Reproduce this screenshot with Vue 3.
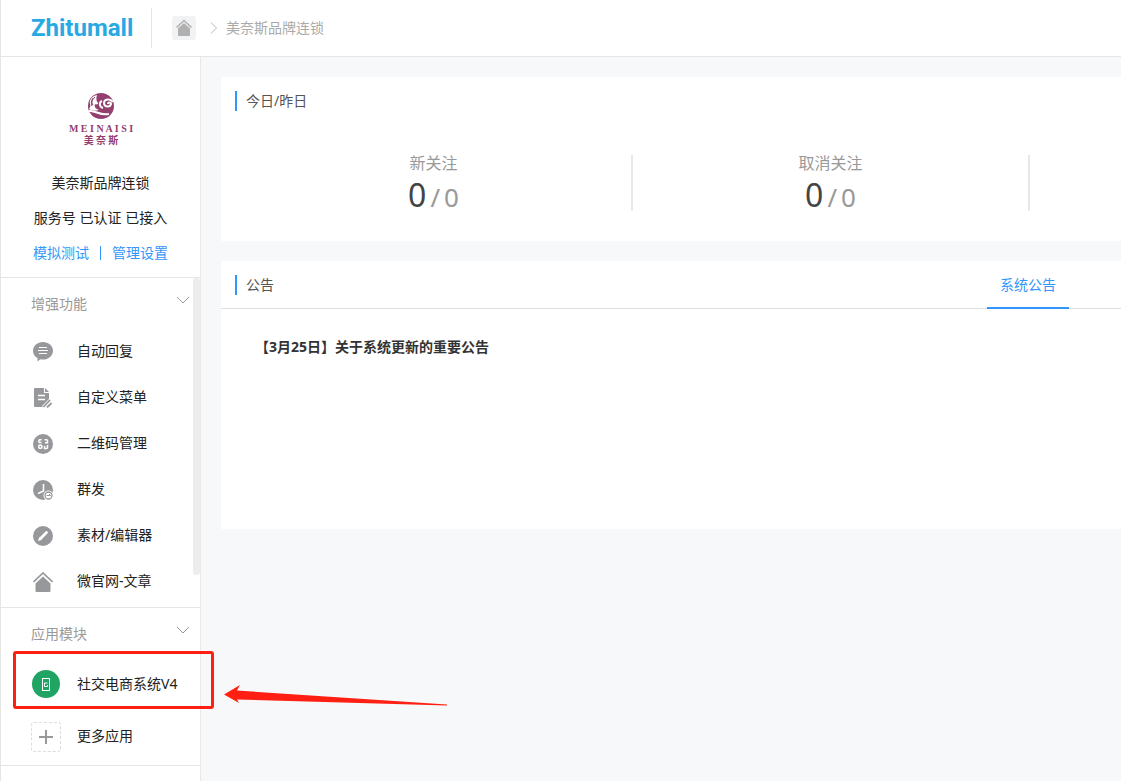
<script setup>
const tools = [
  { label: '自动回复', icon: 'chat' },
  { label: '自定义菜单', icon: 'menu' },
  { label: '二维码管理', icon: 'qr' },
  { label: '群发', icon: 'clock' },
  { label: '素材/编辑器', icon: 'pen' },
  { label: '微官网-文章', icon: 'home' },
]
const stats = [
  { label: '新关注', today: 0, yesterday: 0 },
  { label: '取消关注', today: 0, yesterday: 0 },
]
</script>

<template>
  <div class="page">
    <header class="topbar">
      <a class="brand" href="#">Zhitumall</a>
      <nav class="crumbs">
        <a class="home" href="#" aria-label="首页">
          <svg width="16" height="18" viewBox="0 0 16 18">
            <path d="M0.500 8.500 8 1.500l7.500 7" fill="none" stroke="#b0b0b0" stroke-width="1.500" />
            <path d="M2 9.500 8 4l6 5.500V16a1 1 0 0 1-1 1H3a1 1 0 0 1-1-1z" fill="#b0b0b0" />
          </svg>
        </a>
        <svg class="sep" width="8" height="12" viewBox="0 0 8 12">
          <path d="M1 .5 6.500 6 1 11.500" fill="none" stroke="#b5b5b5" />
        </svg>
        <span>美奈斯品牌连锁</span>
      </nav>
    </header>

    <div class="body">
      <aside class="sidebar">
        <section class="profile">
          <svg class="emblem" width="70" height="58" viewBox="0 0 70 58">
            <circle cx="35" cy="14" r="13" fill="#93406f" />
            <path d="M31 3c-5 1-8 5-7 9 1 2 0 3-1 5 3 2 6 2 10 1-3-1-5-3-4-6 1 1 3 1 3-1-2-2-2-5-1-8z" fill="#fff" />
            <path d="M29 5c-3 3-4 5-2 8M27 6c-2 3-2 5-1 8M31 12c0 4 3 6 7 6" fill="none" stroke="#93406f" stroke-width="1" />
            <path d="M36 9c-3 1-3 6 1 7M47 10c-3-4-9-3-9 1 0 4 6 5 7 1 0-2-3-2-3 0" fill="none" stroke="#fff" stroke-width="2" />
            <path d="M23 19c7-1 10 5 20 3" fill="none" stroke="#fff" stroke-width="2" />
            <text class="emblem-en" x="35" y="40" text-anchor="middle">M E I N A I S I</text>
            <text class="emblem-cn" x="35" y="52" text-anchor="middle">美 奈 斯</text>
          </svg>
          <p>美奈斯品牌连锁</p>
          <p>服务号 已认证 已接入</p>
          <p class="links"><a href="#">模拟测试</a><i></i><a href="#">管理设置</a></p>
        </section>

        <section class="group">
          <button class="group-head" type="button">
            增强功能
            <svg width="14" height="8" viewBox="0 0 14 8"><path d="M1 1l6 6 6-6" fill="none" stroke="#999" /></svg>
          </button>
          <a v-for="t in tools" :key="t.icon" class="item" href="#">
            <span class="icon">
              <svg width="20" height="20" viewBox="0 0 20 20">
                <g v-if="t.icon === 'chat'">
                  <path d="M10 0c5.500 0 10 3.700 10 8.700s-4.500 8.800-10 8.800c-1 0-1.800 0-2.600-.2L4.500 19.500v-3.400C1.600 14.600 0 12 0 8.700 0 3.700 4.500 0 10 0z" fill="#96989b" />
                  <path d="M6 5.500h8M5 8.500h10M6 11.500h8" stroke="#fff" stroke-width="1.200" />
                </g>
                <g v-else-if="t.icon === 'menu'">
                  <path d="M2 0h9v5h5v6l-6 8H2a1 1 0 0 1-1-1V1a1 1 0 0 1 1-1zM12 0l4 4h-4z" fill="#96989b" />
                  <path d="M5 7.500h7M5 11.500h7" stroke="#fff" stroke-width="1.500" />
                  <path d="M10.500 19.500 18 12" stroke="#fff" stroke-width="4" />
                  <path d="M10.500 19l6.500-7M14 19.500l4.500-4.500" stroke="#96989b" stroke-width="1.800" />
                </g>
                <g v-else-if="t.icon === 'qr'">
                  <circle cx="10" cy="10" r="10" fill="#96989b" />
                  <g fill="none" stroke="#fff" stroke-width="1.500">
                    <path d="M5.800 8.500V6.800q0-1 1-1h2M11.500 5.800h2q1 0 1 1v2H12M8.500 8.500H6" />
                    <rect x="5.800" y="11.300" width="3" height="3" rx=".7" />
                    <path d="M14.500 11v2.500q0 1-1 1h-2V12" />
                  </g>
                </g>
                <g v-else-if="t.icon === 'clock'">
                  <circle cx="10" cy="10" r="10" fill="#96989b" />
                  <path d="M10.500 4v7L5 13.500" fill="none" stroke="#fff" stroke-width="1.500" />
                  <circle cx="15.500" cy="15.500" r="5" fill="#fff" />
                  <circle cx="15.500" cy="15.500" r="3.500" fill="none" stroke="#96989b" stroke-width="1.300" />
                  <path d="M13.500 15.500h4M16 14l1.500 1.500" fill="none" stroke="#96989b" />
                </g>
                <g v-else-if="t.icon === 'pen'">
                  <circle cx="10" cy="10" r="10" fill="#96989b" />
                  <path d="M7.500 12.500l6-6" stroke="#fff" stroke-width="2.800" stroke-linecap="round" />
                  <path d="M5 15l1.200-4 2.800 2.800z" fill="#fff" />
                </g>
                <g v-else>
                  <path d="M.5 10 10 1l9.500 9" fill="none" stroke="#96989b" stroke-width="1.700" />
                  <path d="M2.500 11.500 10 4.400l7.500 7.100V19a1 1 0 0 1-1 1h-13a1 1 0 0 1-1-1z" fill="#96989b" />
                </g>
              </svg>
            </span>
            {{ t.label }}
          </a>
          <span class="scrollbar"></span>
        </section>

        <section class="group apps">
          <button class="group-head" type="button">
            应用模块
            <svg width="14" height="8" viewBox="0 0 14 8"><path d="M1 1l6 6 6-6" fill="none" stroke="#999" /></svg>
          </button>
          <a class="item app" href="#">
            <span class="icon">
              <svg width="28" height="28" viewBox="0 0 28 28">
                <circle cx="14" cy="14" r="14" fill="#1fa463" />
                <rect x="10.500" y="8.500" width="7" height="12" fill="none" stroke="#fff" />
                <path d="M15.500 13h-3v3.500h3V15" fill="none" stroke="#fff" />
              </svg>
            </span>
            社交电商系统V4
            <span class="highlight"></span>
            <svg class="arrow" width="224" height="24" viewBox="0 0 224 24">
              <path d="M0 10.500 16 1l-3 5.500L223 20.500v1L13 15.500l2 3.500z" fill="#ff2013" />
            </svg>
          </a>
          <a class="item app" href="#">
            <span class="icon more">
              <svg width="16" height="16" viewBox="0 0 16 16"><path d="M8 1v14M1 8h14" stroke="#999" stroke-width="2" /></svg>
            </span>
            更多应用
          </a>
        </section>
      </aside>

      <main class="main">
        <section class="card">
          <div class="card-head"><h2>今日/昨日</h2></div>
          <div class="stats">
            <div v-for="s in stats" :key="s.label" class="stat">
              <span class="stat-label">{{ s.label }}</span>
              <span class="value"><b>{{ s.today }}</b><span>/</span><span>{{ s.yesterday }}</span></span>
            </div>
          </div>
        </section>
        <section class="card notices">
          <div class="card-head lined">
            <h2>公告</h2>
            <button class="tab" type="button">系统公告</button>
          </div>
          <a class="notice" href="#">【3月25日】关于系统更新的重要公告</a>
        </section>
      </main>
    </div>
  </div>
</template>

<style>
body {
  margin: 0;
  background: #f7f8fa;
}
</style>

<style scoped>
.page {
  display: flex;
  flex-direction: column;
  min-height: 100vh;
  box-sizing: border-box;
  border-left: 1px solid #e5e5e5;
  overflow: hidden;
  color: #222;
  font: 14px/20px "Noto Sans", "Noto Sans CJK SC", sans-serif;
}
a {
  color: inherit;
  text-decoration: none;
}
button {
  padding: 0;
  border: 0;
  background: none;
  font: inherit;
}
.topbar {
  display: flex;
  align-items: center;
  height: 56px;
  border-bottom: 1px solid #e5e5e5;
  background: #fff;
}
.brand {
  width: 120px;
  padding-left: 30px;
  border-right: 1px solid #e5e5e5;
  color: #29a9e3;
  font: bold 24px/40px Roboto, sans-serif;
}
.crumbs {
  display: flex;
  align-items: center;
  padding-left: 20px;
  color: #aaa;
}
.home {
  display: flex;
  align-items: center;
  justify-content: center;
  width: 24px;
  height: 24px;
  border-radius: 3px;
  background: #f0f2f3;
}
.sep {
  margin: 0 8px 0 14px;
}
.body {
  display: flex;
  flex: 1;
}
.sidebar {
  position: relative;
  z-index: 1;
  flex: none;
  width: 199px;
  border-right: 1px solid #e8e8e8;
  background: #fff;
}
.profile {
  padding: 35px 0 7px;
  border-bottom: 1px solid #e5e5e5;
  text-align: center;
}
.emblem {
  display: block;
  margin: 0 auto 15px;
}
.emblem-en {
  fill: #93406f;
  font: bold 10px "Liberation Serif", serif;
}
.emblem-cn {
  fill: #93406f;
  font: bold 10px "Noto Sans CJK SC", sans-serif;
}
.profile p {
  margin: 0;
  line-height: 35px;
}
.links {
  display: flex;
  align-items: center;
  justify-content: center;
  color: #3296fa;
}
.links i {
  width: 1px;
  height: 14px;
  margin: 0 11px;
  background: #3296fa;
}
.group {
  position: relative;
  padding-bottom: 3px;
  border-bottom: 1px solid #e5e5e5;
}
.group-head {
  display: flex;
  justify-content: space-between;
  width: 100%;
  padding: 16px 10px 14px 30px;
  color: #999;
}
.group-head svg {
  margin-top: 2px;
}
.item {
  position: relative;
  display: flex;
  align-items: center;
  height: 46px;
  padding-left: 30px;
}
.app {
  height: 52px;
}
.icon {
  display: flex;
  width: 44px;
  padding: 2px 0 0 2px;
}
.app .icon {
  width: 45px;
  padding: 0 0 0 1px;
}
.app .more {
  box-sizing: border-box;
  align-items: center;
  justify-content: center;
  width: 30px;
  height: 30px;
  margin: 2px 16px 0 0;
  padding: 0;
  border: 1px dashed #ddd;
  border-radius: 3px;
}
.scrollbar {
  position: absolute;
  top: 0;
  right: 0;
  width: 7px;
  height: 297px;
  border-radius: 3px;
  background: #ededed;
}
.highlight {
  position: absolute;
  top: -7px;
  left: 12px;
  box-sizing: border-box;
  width: 201px;
  height: 58px;
  border: 3px solid #ff2013;
  border-radius: 3px;
}
.arrow {
  position: absolute;
  top: 26px;
  left: 223px;
}
.main {
  flex: 1;
  min-width: 0;
  padding: 20px 0 20px 20px;
}
.card {
  margin-bottom: 20px;
  background: #fff;
}
.card-head {
  display: flex;
  align-items: center;
  justify-content: space-between;
  height: 48px;
  padding: 0 52px 0 14px;
}
.card-head h2 {
  margin: 0;
  padding-left: 9px;
  border-left: 2px solid #3296fa;
  color: #555;
  font-size: 14px;
  font-weight: normal;
  line-height: 20px;
}
.lined {
  box-sizing: border-box;
  border-bottom: 1px solid #ddd;
}
.tab {
  align-self: stretch;
  margin-bottom: -1px;
  padding: 2px 13px 0;
  border-bottom: 2px solid #3296fa;
  color: #3296fa;
}
.stats {
  display: grid;
  grid-template-columns: 1fr 1fr 91px;
  padding: 30px 0 30px 15px;
}
.stat {
  display: flex;
  flex-direction: column;
  align-items: center;
  height: 56px;
  border-right: 2px solid #e8e8e8;
  color: #999;
}
.stat-label {
  font-size: 16px;
  line-height: 16px;
}
.value {
  display: flex;
  align-items: baseline;
  gap: 4px;
  font-size: 26px;
  line-height: 48px;
}
.value b {
  color: #444;
  font-size: 32px;
  font-weight: normal;
}
.notices {
  min-height: 268px;
}
.notice {
  display: block;
  padding: 28px 34px;
  color: #333;
  font-weight: bold;
}
</style>
